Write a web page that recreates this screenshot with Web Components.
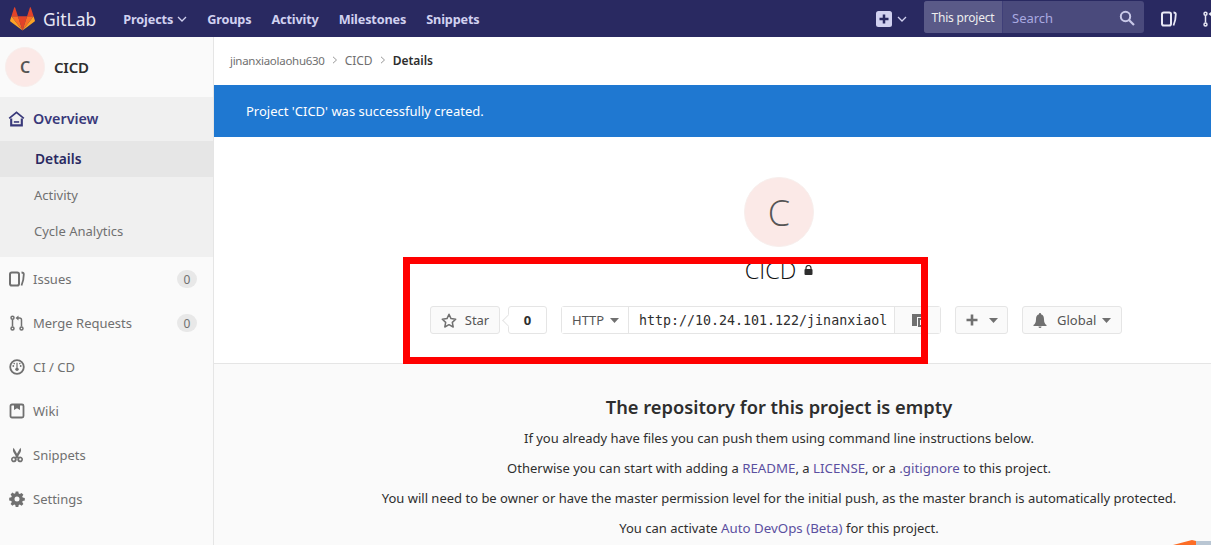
<!DOCTYPE html>
<html><head><meta charset="utf-8"><style>
html,body{margin:0;height:545px;overflow:hidden;background:#fff}
body{font-family:"Noto Sans","Open Sans",sans-serif;font-size:14px;color:#2e2e2e}
</style></head><body>
<gl-app></gl-app>
<script>
const I={
issues:'<rect x="1" y="1.500" width="9" height="13" rx="1.800" fill="none" stroke="currentColor" stroke-width="2"/><path d="M12.500 1.500c1.600 0 2.300.6 2.300 1.800 0 3.500-.8 7.500-2.300 11.200" fill="none" stroke="currentColor" stroke-width="1.800"/>',
mr:'<g fill="none" stroke="currentColor" stroke-width="1.500"><circle cx="3.500" cy="2.800" r="1.500"/><circle cx="3.500" cy="13.400" r="1.500"/><circle cx="12.500" cy="13.400" r="1.500"/><path d="M3.500 4.500v7"/><path d="M12.500 11.500V5c0-1.300-.7-2-2-2H8.500"/></g><path d="M9.500 .5v5L6.500 3z" fill="currentColor"/>',
ci:'<circle cx="8" cy="8" r="6.800" fill="none" stroke="currentColor" stroke-width="1.800"/><g fill="currentColor"><circle cx="8" cy="10.300" r="1.700"/><path d="M7.400 3.800h1.200v5h-1.200z"/><circle cx="4.300" cy="7" r=".9"/><circle cx="11.700" cy="7" r=".9"/><circle cx="5.200" cy="4.600" r=".8"/><circle cx="10.800" cy="4.600" r=".8"/></g>',
wiki:'<path d="M3 1.500h10A1.500 1.500 0 0 1 14.500 3v10a1.500 1.500 0 0 1-1.500 1.500H3A1.500 1.500 0 0 1 1.500 13V3A1.500 1.500 0 0 1 3 1.500z" fill="none" stroke="currentColor" stroke-width="1.800"/><path d="M5 1.500h6v5.500L8 5.200 5 7z" fill="currentColor"/>',
snip:'<path d="M4.600 .8l3.400 6 3.400-6c.9 1.600.9 3.200 0 4.700L9.200 9.200c.3.500 .5.600 .9.500a2.900 2.900 0 1 1-1.700 1.700L8 10.700l-.4.700a2.900 2.900 0 1 1-1.700-1.700c.4.100.6 0 .9-.5L4.600 5.500c-.9-1.500-.9-3.100 0-4.700z" fill="currentColor"/><circle cx="4.700" cy="12.400" r="1.100" fill="#fafafa"/><circle cx="11.300" cy="12.400" r="1.100" fill="#fafafa"/>',
gear:'<path fill-rule="evenodd" d="M6.700 .5h2.600l.4 2.100 1.100.5 1.800-1.200 1.800 1.800-1.200 1.800.5 1.100 2.100.4v2.600l-2.100.4-.5 1.100 1.200 1.800-1.800 1.800-1.800-1.200-1.100.5-.4 2.100H6.700l-.4-2.100-1.100-.5-1.800 1.200-1.800-1.800 1.200-1.800-.5-1.100-2.100-.4V6.700l2.100-.4.500-1.100L1.600 3.400l1.800-1.800 1.800 1.200 1.100-.5zM8 5.500a2.500 2.500 0 1 0 0 5 2.500 2.500 0 0 0 0-5z" fill="currentColor"/>',
home:'<path d="M8 1.200L.6 7.200l1 1.200L8 3.300l6.400 5.100 1-1.200z" fill="currentColor"/><path d="M3 8v6.500h10V8" fill="none" stroke="currentColor" stroke-width="2"/><path d="M5.500 10.500h5V12h-5z" fill="currentColor"/>'
};
const svg=(k,s=16)=>`<svg width="${s}" height="${s}" viewBox="0 0 16 16" style="display:block;flex:none">${I[k]}</svg>`;
const caret='<svg width="9" height="5" viewBox="0 0 10 5" preserveAspectRatio="none" style="display:block;flex:none"><path d="M0 0h10L5 5z" fill="#707070"/></svg>';
const chev='<svg width="10" height="6" viewBox="0 0 10 6" style="display:block;flex:none"><path d="M1 1l4 4 4-4" fill="none" stroke="currentColor" stroke-width="1.300"/></svg>';

class GlNavbar extends HTMLElement{constructor(){super();this.attachShadow({mode:'open'}).innerHTML=`<style>
:host{display:flex;align-items:center;height:37px;background:#292961;color:#d1d1f0;box-sizing:border-box;overflow:hidden;padding-left:10px}
.logo{display:flex;align-items:center;gap:8px;color:#fff;font-size:17.500px;margin-right:27px;font-weight:400}
.logo span{color:#e8e8f5}
nav{display:flex;gap:20px;font-weight:700;font-size:12.700px;align-items:center;letter-spacing:-.15px}
nav div{display:flex;align-items:center;gap:4px}
.right{margin-left:auto;display:flex;align-items:center;flex:none}
.plus{display:flex;align-items:center;gap:5px;margin-right:17px}
.search{display:flex;width:220px;height:32px;background:#4a4a7c;border-radius:3px;overflow:hidden;margin-right:17px;align-items:stretch;margin-top:-3px}
.tp{width:79px;background:#5a5a88;color:#eee;font-size:12px;letter-spacing:-.2px;display:flex;align-items:center;justify-content:center;border-right:1px solid #3f3f78;box-sizing:border-box}
.s{flex:1;display:flex;align-items:center;justify-content:space-between;padding:1px 9px 0 9px;color:#a9a9e0;font-size:13px}
.ic{display:flex;gap:25px;width:50px;overflow:hidden;color:#e8e8f5}
</style>
<div class="logo"><svg width="25" height="24" viewBox="0 0 25 24"><path d="M12.500 23.500l4.600-14.200H7.900z" fill="#e24329"/><path d="M12.500 23.500L7.900 9.300H1.400z" fill="#fc6d26"/><path d="M1.400 9.300L.1 13.400c-.1.400 0 .8.300 1l12.100 9.100z" fill="#fca326"/><path d="M1.400 9.300h6.500L5.100.6c-.1-.4-.7-.4-.9 0z" fill="#e24329"/><path d="M12.500 23.500l4.600-14.200h6.500z" fill="#fc6d26"/><path d="M23.600 9.300l1.300 4.100c.1.400 0 .8-.3 1l-12.100 9.100z" fill="#fca326"/><path d="M23.600 9.300h-6.500L19.900.6c.1-.4.700-.4.900 0z" fill="#e24329"/></svg><span>GitLab</span></div>
<nav><div>Projects ${chev}</div><div>Groups</div><div>Activity</div><div>Milestones</div><div>Snippets</div></nav>
<div class="right"><div class="plus"><svg width="16" height="16" viewBox="0 0 16 16"><rect width="16" height="16" rx="2.500" fill="#d1d1f0"/><path d="M8 3.500v9M3.500 8h9" stroke="#292961" stroke-width="2.500"/></svg>${chev}</div>
<div class="search"><div class="tp">This project</div><div class="s"><span>Search</span><svg width="16" height="16" viewBox="0 0 16 16"><circle cx="6.500" cy="6.500" r="4.700" fill="none" stroke="#c8c8e8" stroke-width="2"/><path d="M10 10l5 5" stroke="#c8c8e8" stroke-width="2.200"/></svg></div></div>
<div class="ic">${svg('issues',16)}${svg('mr',16)}</div></div>`}}
customElements.define('gl-navbar',GlNavbar);

class GlAvatar extends HTMLElement{constructor(){super();const s=this.getAttribute('size')||40;const f=this.getAttribute('fs')||16;const w=this.getAttribute('light')!=null;this.attachShadow({mode:'open'}).innerHTML=`<style>
:host{display:flex;flex:none;width:${s}px;height:${s}px;border-radius:50%;background:#fbe9e7;align-items:center;justify-content:center;color:#555;font-size:${f}px;box-sizing:border-box;border:1px solid #f8eeec;${w?'font-family:"Open Sans",sans-serif;font-weight:300;':''}}
</style><slot></slot>`}}
customElements.define('gl-avatar',GlAvatar);

class GlSideItem extends HTMLElement{constructor(){super();const ic=this.getAttribute('icon');const b=this.getAttribute('badge');this.attachShadow({mode:'open'}).innerHTML=`<style>
:host{display:flex;align-items:center;height:44px;padding:0 16px 0 9px;color:#707070;font-size:13px;box-sizing:border-box;gap:8px}
.b{margin-left:auto;width:20px;height:18px;border-radius:9px;background:#e8e8e8;font-size:12px;display:flex;align-items:center;justify-content:center;color:#707070}
</style>${svg(ic,16)}<slot></slot>${b!=null?`<span class="b">${b}</span>`:''}`}}
customElements.define('gl-side-item',GlSideItem);

class GlSidebar extends HTMLElement{constructor(){super();this.attachShadow({mode:'open'}).innerHTML=`<style>
:host{display:block;width:214px;flex:none;background:#fafafa;border-right:1px solid #e5e5e5;box-sizing:border-box;height:508px;overflow:hidden}
.head{height:60px;display:flex;align-items:center;gap:9px;padding-left:5px;font-weight:600;font-size:15px;color:#2e2e2e;letter-spacing:-.2px}
.group{background:#f0f0f0;height:160px}
.top{height:44px;display:flex;align-items:center;gap:8px;padding:0 0 2px 8px;box-sizing:border-box;color:#39397a;font-weight:600;font-size:14.300px}
.sub{height:36px;display:flex;align-items:center;padding-left:34px;font-size:13px;color:#707070;box-sizing:border-box}
.sub.on{background:#e6e6e6;color:#292961;font-weight:600;font-size:13.800px;padding:0 0 2px 35px}
.sub.a{padding-bottom:1px}
</style>
<div class="head"><gl-avatar size="40" fs="16">C</gl-avatar><span>CICD</span></div>
<div class="group"><div class="top">${svg('home',17)}<span>Overview</span></div><div class="sub on">Details</div><div class="sub a">Activity</div><div class="sub">Cycle Analytics</div></div>
<gl-side-item icon="issues" badge="0">Issues</gl-side-item>
<gl-side-item icon="mr" badge="0">Merge Requests</gl-side-item>
<gl-side-item icon="ci">CI / CD</gl-side-item>
<gl-side-item icon="wiki">Wiki</gl-side-item>
<gl-side-item icon="snip">Snippets</gl-side-item>
<gl-side-item icon="gear">Settings</gl-side-item>`}}
customElements.define('gl-sidebar',GlSidebar);

class GlCrumbs extends HTMLElement{constructor(){super();const sep='<svg width="6" height="8" viewBox="0 0 6 8"><path d="M1 .8L4.500 4 1 7.200" fill="none" stroke="#999" stroke-width="1"/></svg>';this.attachShadow({mode:'open'}).innerHTML=`<style>
:host{display:flex;align-items:center;height:48px;padding:0 0 2px 16px;box-sizing:border-box;gap:7px;font-size:12px;color:#707070}
.u{font-size:11.500px;letter-spacing:-.28px}
b{color:#2e2e2e;font-weight:600}
</style><span class="u">jinanxiaolaohu630</span>${sep}<span>CICD</span>${sep}<b>Details</b>`}}
customElements.define('gl-crumbs',GlCrumbs);

class GlFlash extends HTMLElement{constructor(){super();this.attachShadow({mode:'open'}).innerHTML=`<style>
:host{display:flex;align-items:center;height:52px;background:#1f78d1;color:#fff;padding-left:32px;font-size:13px;box-sizing:border-box}
</style><slot></slot>`}}
customElements.define('gl-flash',GlFlash);

class GlBtn extends HTMLElement{constructor(){super();this.attachShadow({mode:'open'}).innerHTML=`<style>
:host{display:flex;align-items:center;height:28px;box-sizing:border-box;border:1px solid #e5e5e5;border-radius:3px;background:#fafafa;color:#555;font-size:13px;flex:none}
</style><slot></slot>`}}
customElements.define('gl-btn',GlBtn);

class GlHome extends HTMLElement{constructor(){super();this.attachShadow({mode:'open'}).innerHTML=`<style>
:host{display:flex;flex-direction:column;align-items:center;width:1130px;flex:none;height:227px;box-sizing:border-box;padding-top:40px;border-bottom:1px solid #e5e5e5;background:#fff}
h1{margin:8px 0 0;font-family:"Open Sans",sans-serif;font-weight:300;font-size:23.500px;line-height:30px;color:#111;display:flex;align-items:center;gap:8px;height:30px}
.row{display:flex;align-items:center;margin-top:21px;align-self:flex-start;margin-left:216px}
.star{width:70px;justify-content:center;gap:8px}
.count{display:flex;align-items:center;justify-content:center;position:relative;width:39px;height:28px;box-sizing:border-box;border:1px solid #e5e5e5;border-radius:3px;margin-left:8px;font-weight:700;font-size:13px;color:#2e2e2e;background:#fff}
.count:before{content:"";position:absolute;left:-5px;top:9px;width:8px;height:8px;background:#fff;border-left:1px solid #e5e5e5;border-bottom:1px solid #e5e5e5;transform:rotate(45deg)}
.clone{display:flex;margin-left:14px;height:28px;box-sizing:border-box;border:1px solid #e5e5e5;border-radius:3px;align-items:stretch;width:380px;font-size:13px;background:#fff}
.http{width:67px;display:flex;align-items:center;gap:6px;padding-left:10px;box-sizing:border-box;border-right:1px solid #e5e5e5;color:#555;flex:none;background:#fff}
.url{flex:1;font-family:"DejaVu Sans Mono","Liberation Mono",monospace;font-size:13.300px;color:#2e2e2e;display:flex;align-items:center;padding-left:10px;white-space:nowrap;overflow:hidden;border-right:1px solid #e5e5e5}
.cp{width:45px;flex:none;background:#fafafa;display:flex;align-items:center;justify-content:center;color:#707070}
.plus{width:53px;justify-content:center;gap:11px;margin-left:14px}
.bell{width:100px;gap:10px;padding-left:10px;margin-left:14px}
.bell span{margin-right:-4px}
</style>
<gl-avatar size="70" fs="36" light>C</gl-avatar>
<h1>CICD <svg width="9" height="10" viewBox="0 0 9 10" style="display:block"><path d="M2 4.500V3a2.500 2.500 0 0 1 5 0v1.500" fill="none" stroke="#2e2e2e" stroke-width="1.200"/><rect x=".5" y="4" width="8" height="6" rx="1" fill="#2e2e2e"/></svg></h1>
<div class="row">
<gl-btn class="star"><svg width="16" height="15" viewBox="0 0 16 15"><path d="M8 1.300l2 4.300 4.700.6-3.400 3.200.9 4.600L8 11.700l-4.200 2.300.9-4.600L1.300 6.200 6 5.600z" fill="none" stroke="#707070" stroke-width="1.500" stroke-linejoin="round"/></svg>Star</gl-btn>
<div class="count">0</div>
<div class="clone"><div class="http">HTTP ${caret}</div><div class="url">http://10.24.101.122/jinanxiaol</div><div class="cp"><svg width="14" height="15" viewBox="0 0 14 15"><path d="M1 1h9v3H6v9H1z" fill="#707070"/><path d="M7 5h6v9H7z" fill="#707070"/><path d="M9 7h2v5H9z" fill="#fafafa"/></svg></div></div>
<gl-btn class="plus"><svg width="12" height="12" viewBox="0 0 12 12"><path d="M6 .5v11M.5 6h11" stroke="#707070" stroke-width="2.600"/></svg>${caret}</gl-btn>
<gl-btn class="bell"><svg width="14" height="15" viewBox="0 0 14 15"><path d="M7 0a1 1 0 0 1 1 1.200C10.500 1.800 11 4 11 6.500c0 3 1 4.500 2.500 5.500v1H.5v-1C2 11 3 9.500 3 6.500 3 4 3.500 1.800 6 1.200A1 1 0 0 1 7 0z" fill="#707070"/><path d="M5.500 13.500h3a1.500 1.500 0 0 1-3 0z" fill="#707070"/></svg><span>Global</span>${caret}</gl-btn>
</div>`}}
customElements.define('gl-home',GlHome);

class GlEmpty extends HTMLElement{constructor(){super();this.attachShadow({mode:'open'}).innerHTML=`<style>
:host{display:flex;flex-direction:column;align-items:center;background:#fafafa;width:1130px;flex:1;padding-top:30px;box-sizing:border-box;font-size:13px;color:#2e2e2e;text-align:center;overflow:hidden}
h4{font-size:18.300px;font-weight:600;margin:0 0 3px;line-height:26px;color:#2e2e2e}
p{margin:0;line-height:30px;height:30px;white-space:nowrap}
a{color:#5a4fa0;text-decoration:none;font-size:13.300px}
</style>
<h4>The repository for this project is empty</h4>
<p>If you already have files you can push them using command line instructions below.</p>
<p>Otherwise you can start with adding a <a>README</a>, a <a>LICENSE</a>, or a <a>.gitignore</a> to this project.</p>
<p>You will need to be owner or have the master permission level for the initial push, as the master branch is automatically protected.</p>
<p>You can activate <a>Auto DevOps (Beta)</a> for this project.</p>`}}
customElements.define('gl-empty',GlEmpty);

class GlApp extends HTMLElement{constructor(){super();this.attachShadow({mode:'open'}).innerHTML=`<style>
:host{display:block;width:1211px;height:545px;position:relative;overflow:hidden}
.body{display:flex;height:508px}
main{flex:1;display:flex;flex-direction:column;min-width:0;background:#fff;overflow:hidden}
.mark{position:absolute;left:403px;top:257px;width:525px;height:107px;box-sizing:border-box;border:7px solid #f00;pointer-events:none}
.orange{position:absolute;left:1173px;top:540px;width:38px;height:5px;overflow:hidden}
</style>
<gl-navbar></gl-navbar>
<div class="body"><gl-sidebar></gl-sidebar><main><gl-crumbs></gl-crumbs><gl-flash>Project 'CICD' was successfully created.</gl-flash><gl-home></gl-home><gl-empty></gl-empty></main></div>
<div class="mark"></div>
<svg class="orange" viewBox="0 0 38 5"><path d="M0 5L19 0l4 1v4z" fill="#fc6d26"/><path d="M23 1h15v4H23z" fill="#b9c6d3"/></svg>`}}
customElements.define('gl-app',GlApp);
</script>
</body></html>
